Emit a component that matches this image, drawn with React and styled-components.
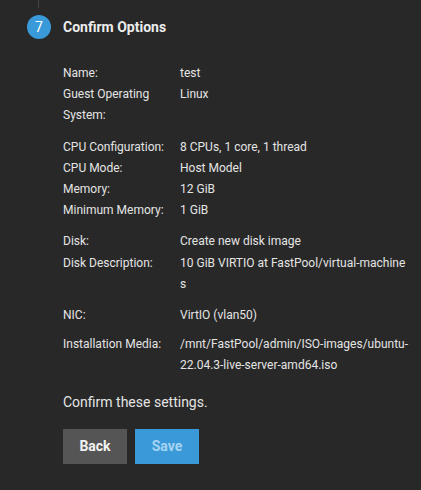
import React from 'react'
import styled, { createGlobalStyle } from 'styled-components'

const GlobalStyle = createGlobalStyle`
  html, body {
    margin: 0;
    padding: 0;
    background: #282828;
  }
  body {
    font-family: Roboto, "Liberation Sans", sans-serif;
    color: #e4e4e4;
  }
`

const Page = styled.div`
  width: 421px;
  height: 490px;
  background: #282828;
  position: relative;
  overflow: hidden;
`

const Connector = styled.div`
  position: absolute;
  left: 38px;
  top: 0;
  width: 1px;
  height: 8px;
  background: #444;
`

const Header = styled.div`
  display: flex;
  align-items: center;
  gap: 12px;
  padding: 15px 0 0 27px;
`

const StepBadge = styled.div`
  width: 24px;
  height: 24px;
  border-radius: 50%;
  background: #3a9ad9;
  color: #fff;
  font-size: 14px;
  display: flex;
  align-items: center;
  justify-content: center;
`

const Title = styled.div`
  font-size: 14px;
  font-weight: 700;
  color: #ececec;
`

const Body = styled.div`
  padding: 24px 0 0 63px;
`

const Group = styled.div`
  margin-bottom: ${p => p.$gap || 10}px;
`

const Row = styled.div`
  display: grid;
  grid-template-columns: 117px 229px;
  font-size: 12px;
  line-height: 21.2px;
`

const Label = styled.div`
  padding-right: 8px;
`

const Value = styled.div`
  word-break: break-all;
`

const Note = styled.div`
  margin-top: 15px;
  font-size: 14px;
  line-height: 21px;
`

const Actions = styled.div`
  display: flex;
  gap: 8px;
  margin-top: 16px;
`

const Button = styled.button`
  width: 64px;
  height: 35px;
  border: none;
  border-radius: 0;
  font-family: Roboto, "Liberation Sans", sans-serif;
  font-size: 14px;
  font-weight: 700;
  background: ${p => (p.primary ? '#3a9ad9' : '#555555')};
  color: ${p => (p.primary ? '#a6d4f2' : '#f2f2f2')};
  cursor: pointer;
`

const groups = [
  {
    rows: [
      ['Name:', 'test'],
      ['Guest Operating System:', 'Linux'],
    ],
  },
  {
    rows: [
      ['CPU Configuration:', '8 CPUs, 1 core, 1 thread'],
      ['CPU Mode:', 'Host Model'],
      ['Memory:', '12 GiB'],
      ['Minimum Memory:', '1 GiB'],
    ],
  },
  {
    rows: [
      ['Disk:', 'Create new disk image'],
      ['Disk Description:', '10 GiB VIRTIO at FastPool/virtual-machines'],
    ],
  },
  { rows: [['NIC:', 'VirtIO (vlan50)']], gap: 8 },
  { rows: [['Installation Media:', '/mnt/FastPool/admin/ISO-images/ubuntu-22.04.3-live-server-amd64.iso']] },
]

const App = () => {
  return (
    <Page>
      <GlobalStyle />
      <Connector />
      <Header>
        <StepBadge>7</StepBadge>
        <Title>Confirm Options</Title>
      </Header>
      <Body>
        {groups.map((g, i) => (
          <Group key={i} $gap={g.gap}>
            {g.rows.map(([label, value]) => (
              <Row key={label}>
                <Label>{label}</Label>
                <Value>{value}</Value>
              </Row>
            ))}
          </Group>
        ))}
        <Note>Confirm these settings.</Note>
        <Actions>
          <Button>Back</Button>
          <Button primary>Save</Button>
        </Actions>
      </Body>
    </Page>
  )
}

export default App
